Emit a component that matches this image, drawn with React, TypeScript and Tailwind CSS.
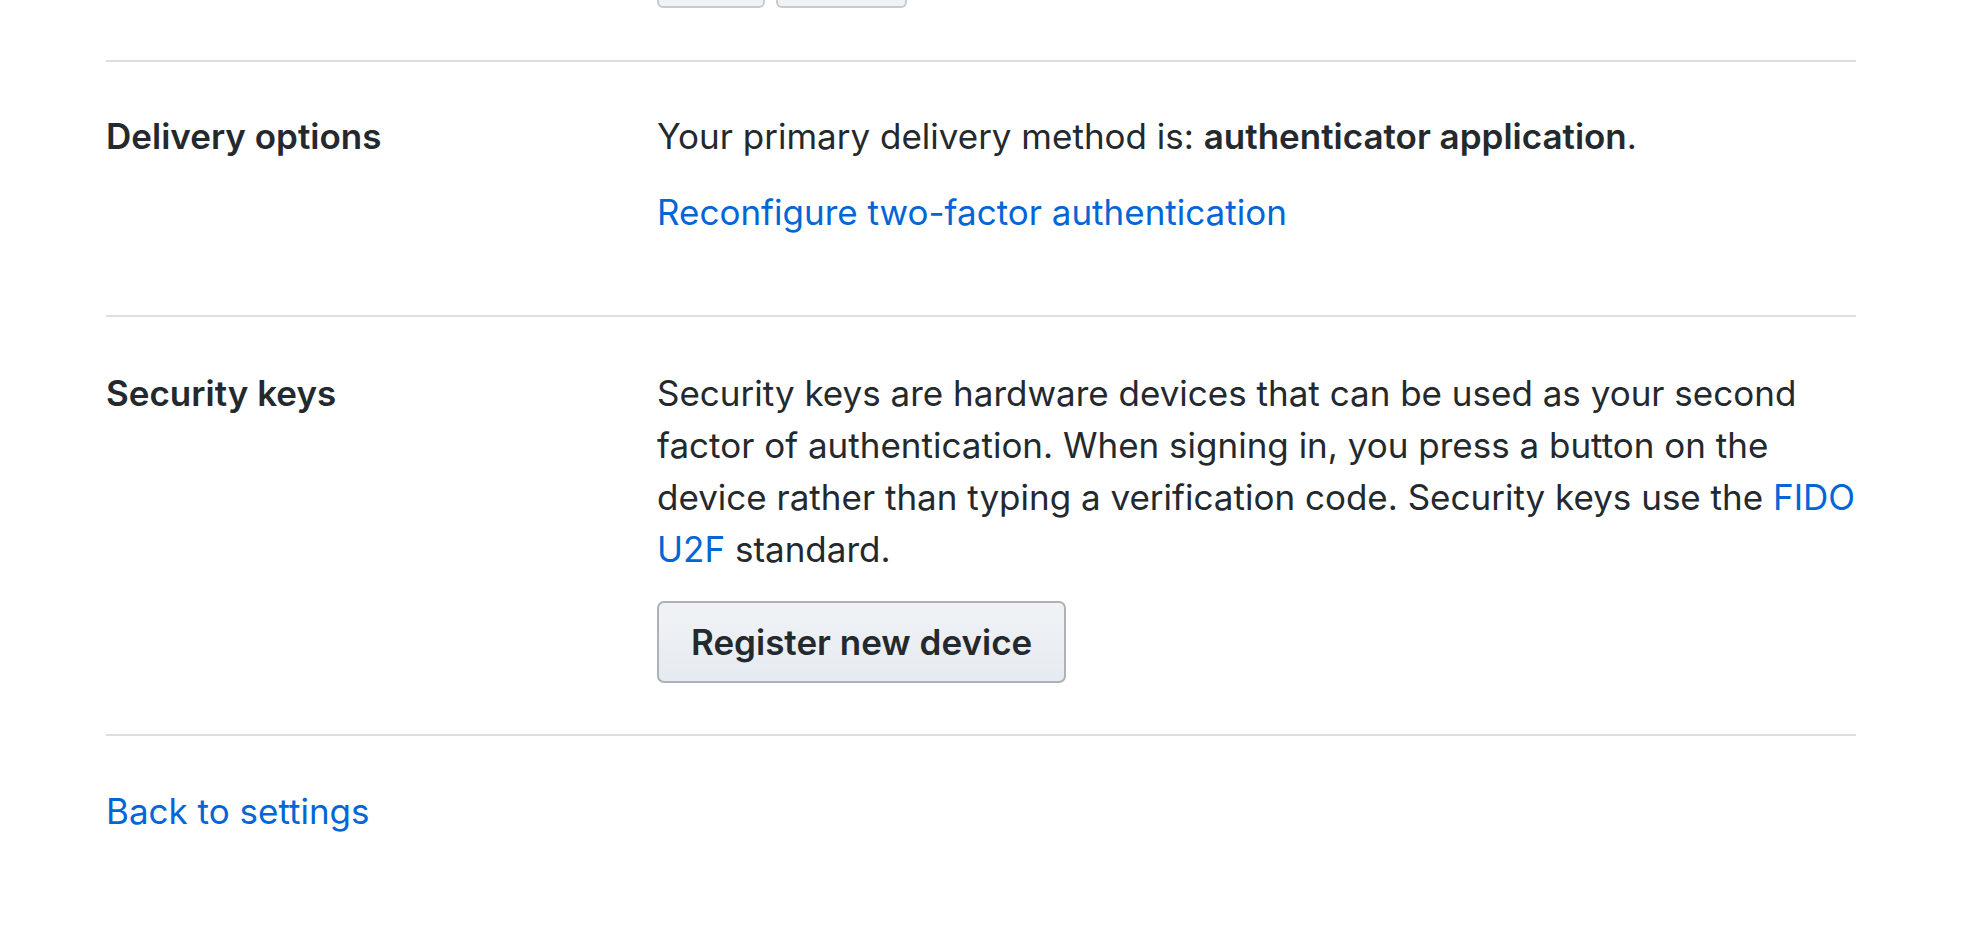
import React from 'react';

function Divider() {
  return <div className="h-[2px] bg-[#dedede]" />;
}

function Row({ label, children }: { label: string; children: React.ReactNode }) {
  return (
    <div className="flex">
      <div className="w-[551px] shrink-0 font-semibold">{label}</div>
      <div className="flex-1 min-w-0">{children}</div>
    </div>
  );
}

export default function App() {
  return (
    <div
      className="min-h-screen bg-white text-[35px] leading-[52px] text-[#24292e]"
      style={{ fontFamily: 'Inter, "Liberation Sans", sans-serif' }}
    >
      <div className="ml-[106px] w-[1750px]">
        {/* bottom edge of the buttons from the section above */}
        <div className="flex gap-[11px] pl-[551px]">
          <div className="h-[8px] w-[108px] rounded-b-[6px] border-x-2 border-b-2 border-[#c8cbce] bg-[#eff3f6]" />
          <div className="h-[8px] w-[131px] rounded-b-[6px] border-x-2 border-b-2 border-[#c8cbce] bg-[#eff3f6]" />
        </div>

        <div className="mt-[52px]">
          <Divider />
        </div>

        <div className="pt-[48px] pb-[77px]">
          <Row label="Delivery options">
            <p className="mb-[24px]">
              Your primary delivery method is: <strong className="font-semibold">authenticator application</strong>.
            </p>
            <a href="#" className="text-[#0366d6]">
              Reconfigure two-factor authentication
            </a>
          </Row>
        </div>

        <Divider />

        <div className="pt-[50px] pb-[51px]">
          <Row label="Security keys">
            <p className="mb-[26px]">
              Security keys are hardware devices that can be used as your second factor of authentication. When
              signing in, you press a button on the device rather than typing a verification code. Security keys
              use the{' '}
              <a href="#" className="text-[#0366d6]">
                FIDO U2F
              </a>{' '}
              standard.
            </p>
            <button
              type="button"
              className="inline-flex h-[82px] items-center rounded-[7px] border-2 border-[#aeb2b6] bg-gradient-to-b from-[#f0f3f6] to-[#e6ebf1] px-[32px] font-semibold text-[#24292e]"
            >
              Register new device
            </button>
          </Row>
        </div>

        <Divider />

        <div className="pt-[49px]">
          <a href="#" className="text-[#0366d6]">
            Back to settings
          </a>
        </div>
      </div>
    </div>
  );
}
